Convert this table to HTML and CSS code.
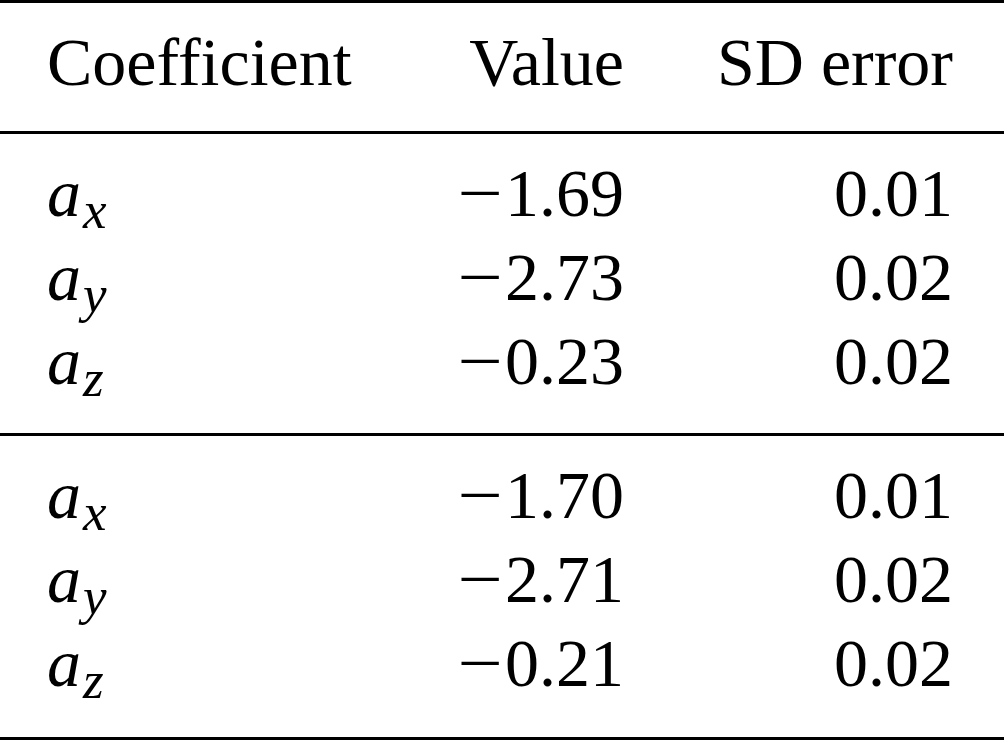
FILE: index.html
```html
<!DOCTYPE html>
<html>
<head>
<meta charset="utf-8">
<link rel="stylesheet" href="styles.css">
</head>
<body>
<div class="table">
  <div class="head row">
    <div class="cell left">Coefficient</div>
    <div class="cell right">Value</div>
    <div class="cell right">SD error</div>
  </div>
  <div class="group">
    <div class="row"><div class="cell left"><i>a</i><sub>x</sub></div><div class="cell right"><span class="minus">−</span>1.69</div><div class="cell right">0.01</div></div>
    <div class="row"><div class="cell left"><i>a</i><sub>y</sub></div><div class="cell right"><span class="minus">−</span>2.73</div><div class="cell right">0.02</div></div>
    <div class="row"><div class="cell left"><i>a</i><sub>z</sub></div><div class="cell right"><span class="minus">−</span>0.23</div><div class="cell right">0.02</div></div>
  </div>
  <div class="group last">
    <div class="row"><div class="cell left"><i>a</i><sub>x</sub></div><div class="cell right"><span class="minus">−</span>1.70</div><div class="cell right">0.01</div></div>
    <div class="row"><div class="cell left"><i>a</i><sub>y</sub></div><div class="cell right"><span class="minus">−</span>2.71</div><div class="cell right">0.02</div></div>
    <div class="row"><div class="cell left"><i>a</i><sub>z</sub></div><div class="cell right"><span class="minus">−</span>0.21</div><div class="cell right">0.02</div></div>
  </div>
</div>
</body>
</html>
```
FILE: styles.css
```css
html, body {
  margin: 0;
  padding: 0;
  background: #ffffff;
}
.table {
  width: 1004px;
  height: 740px;
  box-sizing: border-box;
  font-family: "Liberation Serif", "Times New Roman", serif;
  font-size: 68px;
  line-height: 84px;
  color: #000000;
  border-top: 3px solid #000;
  border-bottom: 3px solid #000;
}
.row {
  display: grid;
  grid-template-columns: 377px 200px 329px;
  padding: 0 51px 0 47px;
  height: 84px;
}
.head {
  padding-top: 17px;
  padding-bottom: 27px;
  border-bottom: 3px solid #000;
}
.group {
  padding-top: 17px;
  padding-bottom: 30px;
  border-bottom: 3px solid #000;
}
.group.last {
  border-bottom: none;
  padding-bottom: 0;
}
.left { text-align: left; white-space: nowrap; }
.right { text-align: right; white-space: nowrap; }
.minus {
  display: inline-block;
  transform: scaleX(1.18);
  margin-right: 6px;
}
.cell i { font-style: italic; }
.cell sub {
  font-style: italic;
  font-size: 0.78em;
  vertical-align: -12px;
  line-height: 0;
  margin-left: 2px;
}
```
